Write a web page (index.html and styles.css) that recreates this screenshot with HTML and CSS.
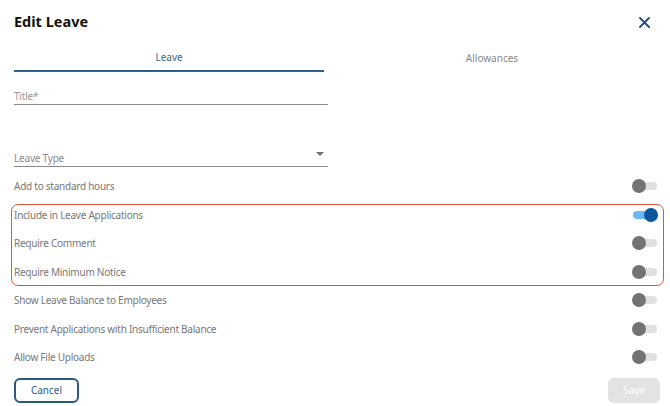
FILE: index.html
```html
<!DOCTYPE html>
<html>
<head>
<meta charset="utf-8">
<link rel="stylesheet" href="styles.css">
</head>
<body>
<div class="dialog">
  <header class="head">
    <h1 class="title">Edit Leave</h1>
    <button class="close" aria-label="Close">
      <svg width="11" height="11" viewBox="0 0 11 11"><path d="M1 1L10 10M10 1L1 10" stroke="#1f4f7c" stroke-width="1.8" stroke-linecap="round"/></svg>
    </button>
  </header>
  <nav class="tabs">
    <div class="tab active">Leave</div>
    <div class="tab">Allowances</div>
  </nav>
  <div class="field title-field"><span class="label">Title*</span></div>
  <div class="field select-field"><span class="label">Leave Type</span><span class="caret"></span></div>
  <div class="rows">
    <div class="row"><span>Add to standard hours</span><span class="toggle"></span></div>
    <div class="group">
      <div class="row"><span>Include in Leave Applications</span><span class="toggle on"></span></div>
      <div class="row"><span>Require Comment</span><span class="toggle"></span></div>
      <div class="row"><span>Require Minimum Notice</span><span class="toggle"></span></div>
    </div>
    <div class="row"><span>Show Leave Balance to Employees</span><span class="toggle"></span></div>
    <div class="row"><span>Prevent Applications with Insufficient Balance</span><span class="toggle"></span></div>
    <div class="row"><span>Allow File Uploads</span><span class="toggle"></span></div>
  </div>
  <footer class="actions">
    <button class="btn cancel">Cancel</button>
    <button class="btn save">Save</button>
  </footer>
</div>
</body>
</html>
```
FILE: styles.css
```css
* { box-sizing: border-box; }
html, body { margin: 0; padding: 0; background: #fff; }
body { font-family: "Noto Sans", "DejaVu Sans", sans-serif; color: #757575; }
.dialog { width: 670px; height: 406px; padding: 0 10px 0 14px; display: flex; flex-direction: column; overflow: hidden; }
.head { display: flex; justify-content: space-between; align-items: center; height: 42px; padding-top: 0; }
.title { margin: 0; font-size: 14.5px; font-weight: 700; color: #111; }
.close { border: 0; background: none; padding: 0; margin-right: 10px; margin-top: 2px; display: flex; }
.tabs { display: grid; grid-template-columns: 310px 1fr; height: 30px; }
.tab { display: flex; align-items: center; justify-content: center; font-size: 10px; color: #888; height: 30px; padding-top: 1px; }
.tab.active { color: #3a6a94; border-bottom: 2px solid #2e5f8b; }
.field { width: 314px; border-bottom: 1px solid #8a8a8a; display: flex; align-items: flex-end; justify-content: space-between; font-size: 10px; color: #9a9a9a; }
.field .label { padding-bottom: 1px; letter-spacing: -0.2px; }
.title-field { height: 33px; }
.select-field { height: 62px; color: #8a8a8a; }
.caret { width: 0; height: 0; border-left: 4px solid transparent; border-right: 4px solid transparent; border-top: 4px solid #6f6f6f; margin: 0 4px 10px 0; }
.rows { display: flex; flex-direction: column; margin-top: 5px; }
.row { height: 28.5px; display: flex; align-items: center; justify-content: space-between; font-size: 10px; letter-spacing: -0.25px; color: #777; padding-right: 3px; }
.group { position: relative; }
.group::before { content: ""; position: absolute; left: -3px; right: -4px; top: 3px; bottom: 0; border: 1.5px solid #e2533b; border-radius: 7px; pointer-events: none; }
.toggle { position: relative; width: 24px; height: 8px; border-radius: 4px; background: #e0e0e0; }
.toggle::after { content: ""; position: absolute; left: -1px; top: -3px; width: 14px; height: 14px; border-radius: 50%; background: #737373; }
.toggle.on { background: #6cb8f4; }
.toggle.on::after { left: 11px; background: #0d559a; }
.actions { display: flex; justify-content: space-between; margin-top: 6px; }
.btn { font-family: inherit; font-size: 10px; border-radius: 6px; height: 25px; cursor: pointer; }
.cancel { width: 65px; background: #fff; border: 2px solid #2a5a84; color: #2a5a84; }
.save { width: 52px; background: #e3e3e3; border: 0; color: #fff; }
```
